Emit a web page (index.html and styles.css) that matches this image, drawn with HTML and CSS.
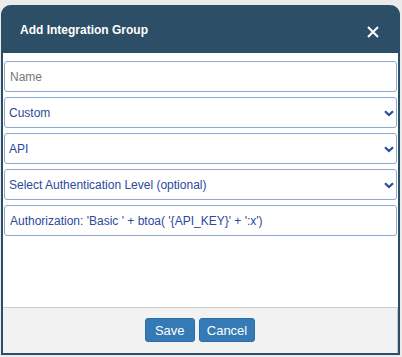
FILE: index.html
```html
<!DOCTYPE html>
<html lang="en">

<head>
    <meta charset="UTF-8">
    <meta name="viewport" content="width=device-width, initial-scale=1.0">
    <title>Add Integration Group</title>
    <link rel="stylesheet" href="styles.css">
</head>

<body>
    <!-- Dialog -->
    <div class="dialog">
        <div class="dialog-header">
            <span class="dialog-title">Add Integration Group</span>
            <button type="button" class="btn-close" aria-label="Close">
                <svg width="12" height="12" viewBox="0 0 12 12">
                    <path d="M1 1 L11 11 M11 1 L1 11" stroke="#fff" stroke-width="2" fill="none" />
                </svg>
            </button>
        </div>

        <form class="dialog-body">
            <input type="text" class="field" placeholder="Name">
            <div class="select-wrap">
                <select class="field">
                    <option>Custom</option>
                </select>
                <svg class="chevron" width="10" height="7" viewBox="0 0 10 7">
                    <path d="M1 1.2 L5 5 L9 1.2" stroke="#2a4a9c" stroke-width="2.2" fill="none" />
                </svg>
            </div>
            <div class="select-wrap">
                <select class="field">
                    <option>API</option>
                </select>
                <svg class="chevron" width="10" height="7" viewBox="0 0 10 7">
                    <path d="M1 1.2 L5 5 L9 1.2" stroke="#2a4a9c" stroke-width="2.2" fill="none" />
                </svg>
            </div>
            <div class="select-wrap">
                <select class="field">
                    <option>Select Authentication Level (optional)</option>
                </select>
                <svg class="chevron" width="10" height="7" viewBox="0 0 10 7">
                    <path d="M1 1.2 L5 5 L9 1.2" stroke="#2a4a9c" stroke-width="2.2" fill="none" />
                </svg>
            </div>
            <input type="text" class="field" value="Authorization: 'Basic ' + btoa( '{API_KEY}' + ':x')">
        </form>

        <div class="dialog-footer">
            <button type="button" class="btn">Save</button>
            <button type="button" class="btn">Cancel</button>
        </div>
    </div>
</body>

</html>
```

FILE: styles.css
```css
/* Reset */
* {
    margin: 0;
    padding: 0;
    box-sizing: border-box;
    font-family: 'Liberation Sans', Arial, sans-serif;
}

:root {
    --cor-dialog: #2c4e66;
    --cor-borda: #8eaad2;
    --cor-texto-campo: #2a4a9c;
    --cor-botao: #337ab7;
    --cor-botao-borda: #2e6da4;
}

body {
    background-color: #ebebeb;
}

/* Dialog */
.dialog {
    width: 399px;
    height: 350px;
    margin: 5px 2px 2px 1px;
    border: 2px solid var(--cor-dialog);
    border-top: none;
    border-radius: 10px 10px 0 0;
    background-color: #fff;
    display: flex;
    flex-direction: column;
}

.dialog-header {
    height: 48px;
    background-color: var(--cor-dialog);
    border-radius: 10px 10px 0 0;
    margin: 0 -2px;
    padding: 2px 21px 0 19px;
    display: flex;
    align-items: center;
    justify-content: space-between;
}

.dialog-title {
    color: #fff;
    font-size: 12px;
    font-weight: bold;
}

.btn-close {
    background: none;
    border: none;
    width: 12px;
    height: 12px;
    display: flex;
    margin-top: 3px;
    cursor: pointer;
}

.dialog-body {
    flex: 1;
    padding: 8px 1px 0 1px;
    display: flex;
    flex-direction: column;
    gap: 5px;
}

.field {
    width: 100%;
    height: 31px;
    padding: 0 5px;
    border: 1px solid var(--cor-borda);
    border-radius: 3px;
    background-color: #fff;
    color: var(--cor-texto-campo);
    font-size: 12px;
    outline: none;
}

.field::placeholder {
    color: #777;
}

select.field {
    appearance: none;
    -webkit-appearance: none;
    padding-left: 4px;
}

.select-wrap {
    position: relative;
}

.chevron {
    position: absolute;
    right: 3px;
    top: 13px;
    pointer-events: none;
}

/* Footer */
.dialog-footer {
    height: 46px;
    background-color: #f2f2f2;
    border-top: 1px solid #ccc;
    border-right: 1px solid #ccc;
    display: flex;
    justify-content: center;
    align-items: center;
    gap: 4px;
    padding-bottom: 1px;
}

.btn {
    height: 24px;
    min-width: 50px;
    padding: 0 7px;
    background-color: var(--cor-botao);
    border: 1px solid var(--cor-botao-borda);
    border-radius: 3px;
    color: #fff;
    font-size: 13px;
    cursor: pointer;
}
```
